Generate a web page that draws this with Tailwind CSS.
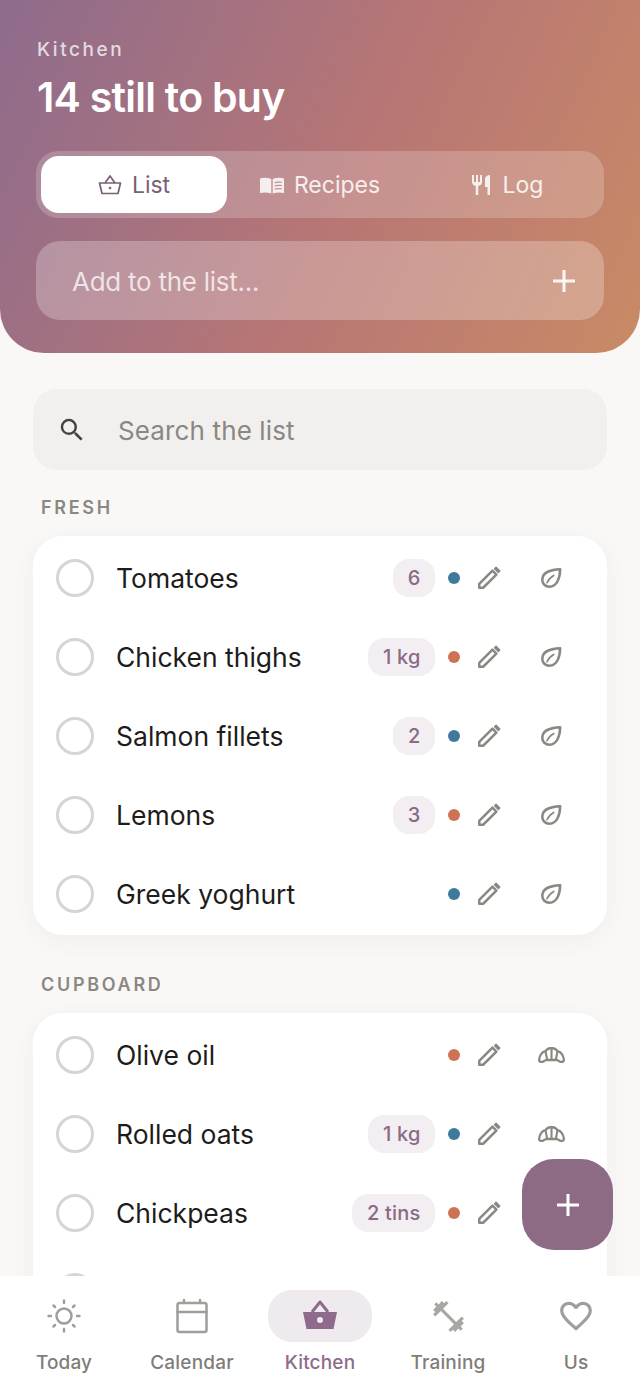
<!DOCTYPE html>
<html lang="en">

<head>
  <meta charset="UTF-8" />
  <meta name="viewport" content="width=device-width, initial-scale=1.0" />
  <title>Kitchen</title>
  <script src="https://cdn.jsdelivr.net/npm/@tailwindcss/browser@4"></script>
</head>

<body class="font-['Inter',sans-serif] bg-[#faf8f6]">
  <!-- shared icons -->
  <svg class="hidden">
    <symbol id="pencil" viewBox="0 0 24 24">
      <path d="M3 21v-3.600L15.200 5.200l3.600 3.600L6.600 21H3z" fill="none" stroke="currentColor" stroke-width="2.300" stroke-linejoin="round" />
      <path d="M17.200 3.400l1.300-1.300 3.400 3.400-1.300 1.300z" fill="currentColor" stroke="currentColor" stroke-width="1.400" stroke-linejoin="round" />
    </symbol>
    <symbol id="leaf" viewBox="0 0 24 24">
      <path d="M22 2.500C13 3 3 4.500 2.500 13.500 2.300 18.500 6 21.500 10.400 21.500 18.500 21.500 21.800 12 22 2.500z" fill="none" stroke="currentColor" stroke-width="2.800" stroke-linejoin="round" />
      <path d="M7.600 17.200c1.600-3.600 4.200-6.200 7.400-8" fill="none" stroke="currentColor" stroke-width="1.800" stroke-linecap="round" />
    </symbol>
    <symbol id="croissant" viewBox="0 0 27 16">
      <path d="M3.500 15C1.500 15 .8 13.500 1.200 12 2 8 4.500 5 7.500 4.200 9 1.800 11.500 1.100 13.500 1.100 15.500 1.100 18 1.800 19.500 4.200 22.500 5 25 8 25.800 12 26.200 13.500 25.500 15 23.500 15 22 15 20.500 13.500 19 13H8C6.500 13.500 5 15 3.500 15z" fill="none" stroke="currentColor" stroke-width="2.300" stroke-linejoin="round" />
      <path d="M7.500 4.200L9.200 13M13.500 1.100V13M19.500 4.200L17.800 13" fill="none" stroke="currentColor" stroke-width="2.100" />
    </symbol>
  </svg>

  <div class="relative flex flex-col h-[1385px] w-[640px] overflow-hidden">
    <header class="shrink-0 h-[353px] rounded-b-[44px] bg-linear-115 from-[#8e6b8c] via-[#b87674] via-55% to-[#c98a65] px-9 pt-[39px]">
      <p class="text-[19px] leading-[22px] font-medium tracking-[0.135em] text-white/75 pl-px">Kitchen</p>
      <h1 class="mt-[12px] text-[41px] leading-[48px] font-semibold tracking-[-0.018em] text-white pl-px">14 still to buy</h1>

      <div class="mt-[30px] flex h-[67px] items-center rounded-[22px] bg-white/20 px-[5px]">
        <div class="flex h-[57px] w-[186px] items-center justify-center gap-[10px] rounded-[18px] bg-white text-[23px] text-[#7a5f78]">
          <svg class="w-6 h-6" viewBox="0 0 24 24" fill="none" stroke="currentColor" stroke-width="1.700" stroke-linejoin="round">
            <path d="M1.500 10h21L20 20.500H4L1.500 10z" />
            <path d="M7 10l5-7 5 7" />
            <circle cx="12" cy="15" r="1.300" fill="currentColor" stroke="none" />
          </svg>
          <span class="pt-[2px]">List</span>
        </div>
        <div class="flex w-[186px] items-center justify-center gap-[10px] text-[23px] text-white/85">
          <svg class="w-6 h-6" viewBox="0 0 24 24" fill="currentColor">
            <path d="M0 5.500C3 4.500 7.500 4.500 11.300 6v14.500C7.500 19.200 3 19.200 0 20V5.500z" />
            <path d="M12.700 6C16.500 4.500 21 4.500 24 5.500V20c-3-.8-7.500-.8-11.300.5V6zm2 3v1.200c2-.7 5-.7 7-.3V8.700c-2-.4-5-.4-7 .3zm0 3.300v1.200c2-.7 5-.7 7-.3V12c-2-.4-5-.4-7 .3zm0 3.300v1.200c2-.7 5-.7 7-.3v-1.200c-2-.4-5-.4-7 .3z" fill-rule="evenodd" />
          </svg>
          <span class="pt-[2px]">Recipes</span>
        </div>
        <div class="flex w-[186px] items-center justify-center gap-[10px] text-[23px] text-white/85">
          <svg class="w-6 h-6" viewBox="0 0 24 24" fill="currentColor">
            <path d="M11 9H9V2H7v7H5V2H3v7c0 2.120 1.660 3.840 3.750 3.970V22h2.500v-9.030C11.340 12.840 13 11.120 13 9V2h-2v7zm5-3v8h2.500v8H21V2c-2.760 0-5 2.240-5 4z" />
          </svg>
          <span class="pt-[2px]">Log</span>
        </div>
      </div>

      <div class="mt-[23px] flex h-[79px] items-center justify-between rounded-[24px] bg-white/25 pl-9 pr-[26px]">
        <span class="pt-[2px] text-[26px] tracking-[-0.01em] text-white/75">Add to the list...</span>
        <svg class="w-7 h-7 text-white/90" viewBox="0 0 28 28" fill="none" stroke="currentColor" stroke-width="3">
          <path d="M14 3v22M3 14h22" />
        </svg>
      </div>
    </header>

    <main class="flex-1 min-h-0 overflow-hidden px-[33px] pt-9">
      <div class="flex h-[81px] items-center gap-[31px] rounded-[24px] bg-[#f1f0ee] pl-6">
        <svg class="w-[30px] h-[30px] text-[#45423f]" viewBox="0 0 24 24" fill="currentColor">
          <path d="M15.500 14h-.790l-.280-.270A6.471 6.471 0 0 0 16 9.500 6.500 6.500 0 1 0 9.500 16c1.610 0 3.090-.590 4.230-1.570l.270.280v.790l5 4.990L20.490 19l-4.990-5zm-6 0C7.010 14 5 11.990 5 9.500S7.010 5 9.500 5 14 7.010 14 9.500 11.990 14 9.500 14z" />
        </svg>
        <span class="pt-[2px] text-[26px] tracking-[0.005em] text-[#8b8781]">Search the list</span>
      </div>

      <h2 class="mt-[26px] pl-2 text-[18px] leading-[24px] font-semibold tracking-[0.15em] text-[#8b8781]">FRESH</h2>
      <section class="mt-[16px] rounded-[30px] bg-white pt-[2px] pb-[2px] shadow-[0_6px_24px_rgba(60,40,30,0.05)]">
        <div class="flex h-[79px] items-center pl-[23px]">
          <span class="h-[38px] w-[38px] rounded-full border-[3px] border-[#d6d5d3]"></span>
          <span class="ml-[22px] flex-1 pt-[3px] text-[26.500px] text-[#1e1c1a]">Tomatoes</span>
          <span class="rounded-[16px] bg-[#f2eef2] px-[14.500px] py-[6px] text-[20px] leading-[26px] font-medium tracking-[0.01em] text-[#8a6a87]">6</span>
          <span class="ml-[13px] h-3 w-3 rounded-full bg-[#3f7a9c]"></span>
          <svg class="ml-[16px] w-[26px] h-[26px] text-[#8b8781]"><use href="#pencil" /></svg>
          <svg class="ml-[38px] mr-[45px] w-[22px] h-[22px] text-[#8b8781]"><use href="#leaf" /></svg>
        </div>
        <div class="flex h-[79px] items-center pl-[23px]">
          <span class="h-[38px] w-[38px] rounded-full border-[3px] border-[#d6d5d3]"></span>
          <span class="ml-[22px] flex-1 pt-[3px] text-[26.500px] text-[#1e1c1a]">Chicken thighs</span>
          <span class="rounded-[16px] bg-[#f2eef2] px-[14.500px] py-[6px] text-[20px] leading-[26px] font-medium tracking-[0.01em] text-[#8a6a87]">1 kg</span>
          <span class="ml-[13px] h-3 w-3 rounded-full bg-[#cd7355]"></span>
          <svg class="ml-[16px] w-[26px] h-[26px] text-[#8b8781]"><use href="#pencil" /></svg>
          <svg class="ml-[38px] mr-[45px] w-[22px] h-[22px] text-[#8b8781]"><use href="#leaf" /></svg>
        </div>
        <div class="flex h-[79px] items-center pl-[23px]">
          <span class="h-[38px] w-[38px] rounded-full border-[3px] border-[#d6d5d3]"></span>
          <span class="ml-[22px] flex-1 pt-[3px] text-[26.500px] text-[#1e1c1a]">Salmon fillets</span>
          <span class="rounded-[16px] bg-[#f2eef2] px-[14.500px] py-[6px] text-[20px] leading-[26px] font-medium tracking-[0.01em] text-[#8a6a87]">2</span>
          <span class="ml-[13px] h-3 w-3 rounded-full bg-[#3f7a9c]"></span>
          <svg class="ml-[16px] w-[26px] h-[26px] text-[#8b8781]"><use href="#pencil" /></svg>
          <svg class="ml-[38px] mr-[45px] w-[22px] h-[22px] text-[#8b8781]"><use href="#leaf" /></svg>
        </div>
        <div class="flex h-[79px] items-center pl-[23px]">
          <span class="h-[38px] w-[38px] rounded-full border-[3px] border-[#d6d5d3]"></span>
          <span class="ml-[22px] flex-1 pt-[3px] text-[26.500px] text-[#1e1c1a]">Lemons</span>
          <span class="rounded-[16px] bg-[#f2eef2] px-[14.500px] py-[6px] text-[20px] leading-[26px] font-medium tracking-[0.01em] text-[#8a6a87]">3</span>
          <span class="ml-[13px] h-3 w-3 rounded-full bg-[#cd7355]"></span>
          <svg class="ml-[16px] w-[26px] h-[26px] text-[#8b8781]"><use href="#pencil" /></svg>
          <svg class="ml-[38px] mr-[45px] w-[22px] h-[22px] text-[#8b8781]"><use href="#leaf" /></svg>
        </div>
        <div class="flex h-[79px] items-center pl-[23px]">
          <span class="h-[38px] w-[38px] rounded-full border-[3px] border-[#d6d5d3]"></span>
          <span class="ml-[22px] flex-1 pt-[3px] text-[26.500px] text-[#1e1c1a]">Greek yoghurt</span>
          <span class="ml-[13px] h-3 w-3 rounded-full bg-[#3f7a9c]"></span>
          <svg class="ml-[16px] w-[26px] h-[26px] text-[#8b8781]"><use href="#pencil" /></svg>
          <svg class="ml-[38px] mr-[45px] w-[22px] h-[22px] text-[#8b8781]"><use href="#leaf" /></svg>
        </div>
      </section>

      <h2 class="mt-[38px] pl-2 text-[18px] leading-[24px] font-semibold tracking-[0.15em] text-[#8b8781]">CUPBOARD</h2>
      <section class="mt-[16px] rounded-[30px] bg-white pt-[2px] pb-[3px] shadow-[0_6px_24px_rgba(60,40,30,0.05)]">
        <div class="flex h-[79px] items-center pl-[23px]">
          <span class="h-[38px] w-[38px] rounded-full border-[3px] border-[#d6d5d3]"></span>
          <span class="ml-[22px] flex-1 pt-[3px] text-[26.500px] text-[#1e1c1a]">Olive oil</span>
          <span class="ml-[13px] h-3 w-3 rounded-full bg-[#cd7355]"></span>
          <svg class="ml-[16px] w-[26px] h-[26px] text-[#8b8781]"><use href="#pencil" /></svg>
          <svg class="ml-[36px] mr-[42px] w-[27px] h-[16px] text-[#8b8781]"><use href="#croissant" /></svg>
        </div>
        <div class="flex h-[79px] items-center pl-[23px]">
          <span class="h-[38px] w-[38px] rounded-full border-[3px] border-[#d6d5d3]"></span>
          <span class="ml-[22px] flex-1 pt-[3px] text-[26.500px] text-[#1e1c1a]">Rolled oats</span>
          <span class="rounded-[16px] bg-[#f2eef2] px-[14.500px] py-[6px] text-[20px] leading-[26px] font-medium tracking-[0.01em] text-[#8a6a87]">1 kg</span>
          <span class="ml-[13px] h-3 w-3 rounded-full bg-[#3f7a9c]"></span>
          <svg class="ml-[16px] w-[26px] h-[26px] text-[#8b8781]"><use href="#pencil" /></svg>
          <svg class="ml-[36px] mr-[42px] w-[27px] h-[16px] text-[#8b8781]"><use href="#croissant" /></svg>
        </div>
        <div class="flex h-[79px] items-center pl-[23px]">
          <span class="h-[38px] w-[38px] rounded-full border-[3px] border-[#d6d5d3]"></span>
          <span class="ml-[22px] flex-1 pt-[3px] text-[26.500px] text-[#1e1c1a]">Chickpeas</span>
          <span class="rounded-[16px] bg-[#f2eef2] px-[14.500px] py-[6px] text-[20px] leading-[26px] font-medium tracking-[0.01em] text-[#8a6a87]">2 tins</span>
          <span class="ml-[13px] h-3 w-3 rounded-full bg-[#cd7355]"></span>
          <svg class="ml-[16px] w-[26px] h-[26px] text-[#8b8781]"><use href="#pencil" /></svg>
          <svg class="ml-[36px] mr-[42px] w-[27px] h-[16px] text-[#8b8781]"><use href="#croissant" /></svg>
        </div>
        <div class="flex h-[79px] items-center pl-[23px]">
          <span class="h-[38px] w-[38px] rounded-full border-[3px] border-[#d6d5d3]"></span>
        </div>
      </section>
    </main>

    <nav class="shrink-0 grid h-[109px] grid-cols-5 bg-white">
      <div class="flex flex-col items-center">
        <div class="mt-[14px] flex h-[52px] w-[104px] items-center justify-center text-[#a09e9b]">
          <svg class="w-9 h-9" viewBox="0 0 36 36" fill="none" stroke="currentColor" stroke-width="2.500" stroke-linecap="round">
            <circle cx="18" cy="18" r="7.500" />
            <path d="M18 2.500v2.500M18 31v2.500M2.500 18H5M31 18h2.500M7.500 7.500l1.500 1.500M27 27l1.500 1.500M7.500 28.500L9 27M27 9l1.500-1.500" />
          </svg>
        </div>
        <span class="mt-[9px] text-[19px] leading-[24px] font-medium tracking-[0.005em] text-[#7f7d79]">Today</span>
      </div>
      <div class="flex flex-col items-center">
        <div class="mt-[14px] flex h-[52px] w-[104px] items-center justify-center text-[#a09e9b]">
          <svg class="w-9 h-9" viewBox="0 0 36 36" fill="none" stroke="currentColor" stroke-width="2.500" stroke-linecap="round" stroke-linejoin="round">
            <rect x="3.500" y="5" width="29" height="29" rx="2" />
            <path d="M3.500 14h29M10 2v3M26 2v3" />
          </svg>
        </div>
        <span class="mt-[9px] text-[19px] leading-[24px] font-medium tracking-[0.01em] text-[#7f7d79]">Calendar</span>
      </div>
      <div class="flex flex-col items-center">
        <div class="mt-[14px] flex h-[52px] w-[104px] items-center justify-center rounded-[24px] bg-[#efeaee] text-[#8e6b8a]">
          <svg class="w-9 h-9" viewBox="0 0 36 36" fill="currentColor">
            <path fill-rule="evenodd" d="M1 14h34l-3.500 17h-27L1 14zm17 5a3 3 0 1 0 0 6 3 3 0 0 0 0-6z" />
            <path d="M10 14l8-10 8 10" fill="none" stroke="currentColor" stroke-width="3" stroke-linejoin="round" />
          </svg>
        </div>
        <span class="mt-[9px] text-[19px] leading-[24px] font-medium tracking-[0.01em] text-[#8e6b8a]">Kitchen</span>
      </div>
      <div class="flex flex-col items-center">
        <div class="mt-[14px] flex h-[52px] w-[104px] items-center justify-center text-[#a9a7a4]">
          <svg class="w-[37px] h-[37px]" viewBox="0 0 24 24" fill="currentColor">
            <path d="M20.570 14.860L22 13.430 20.570 12 17 15.570 8.430 7 12 3.430 10.570 2 9.140 3.430 7.710 2 5.570 4.140 4.140 2.710 2.710 4.140l1.430 1.430L2 7.710l1.430 1.430L2 10.570 3.430 12 7 8.430 15.570 17 12 20.570 13.430 22l1.430-1.430L16.290 22l2.140-2.140 1.430 1.430 1.430-1.430-1.430-1.430L22 16.290z" />
          </svg>
        </div>
        <span class="mt-[9px] text-[19px] leading-[24px] font-medium tracking-[0.01em] text-[#7f7d79]">Training</span>
      </div>
      <div class="flex flex-col items-center">
        <div class="mt-[14px] flex h-[52px] w-[104px] items-center justify-center text-[#a09e9b]">
          <svg class="w-[38px] h-[38px]" viewBox="0 0 24 24" fill="currentColor">
            <path d="M16.500 3c-1.740 0-3.410.810-4.500 2.090C10.910 3.810 9.240 3 7.500 3 4.420 3 2 5.420 2 8.500c0 3.780 3.400 6.860 8.550 11.540L12 21.350l1.450-1.320C18.600 15.360 22 12.280 22 8.500 22 5.420 19.580 3 16.500 3zm-4.400 15.550l-.1.100-.1-.100C7.140 14.240 4 11.390 4 8.500 4 6.500 5.500 5 7.500 5c1.540 0 3.040.990 3.570 2.360h1.870C13.460 5.990 14.960 5 16.500 5c2 0 3.500 1.500 3.500 3.500 0 2.890-3.140 5.740-7.900 10.050z" />
          </svg>
        </div>
        <span class="mt-[9px] text-[19px] leading-[24px] font-medium tracking-[0.01em] text-[#7f7d79]">Us</span>
      </div>
    </nav>

    <button class="absolute left-[522px] top-[1159px] flex h-[91px] w-[91px] items-center justify-center rounded-[32px] bg-[#8e6b85] text-white">
      <svg class="w-7 h-7" viewBox="0 0 28 28" fill="none" stroke="currentColor" stroke-width="3">
        <path d="M14 3v22M3 14h22" />
      </svg>
    </button>
  </div>
</body>

</html>
